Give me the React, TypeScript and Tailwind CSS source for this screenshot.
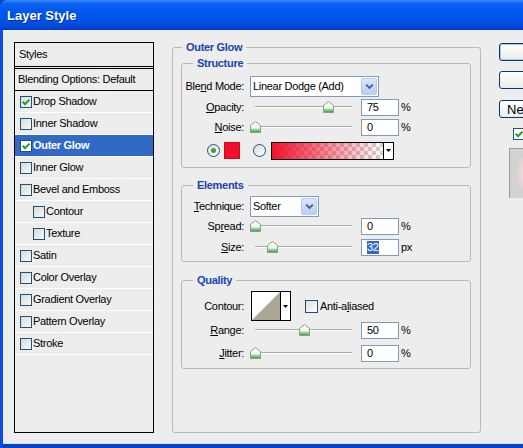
import React from "react";

function Check({ checked = false, white = false }: { checked?: boolean; white?: boolean }) {
  return (
    <span
      className={`flex h-[12px] w-[12px] shrink-0 items-center justify-center border border-[#1c5180] ${
        white ? "bg-white" : "bg-[linear-gradient(135deg,#dcdcd6,#f6f6f4)]"
      }`}
    >
      {checked && (
        <svg width="10" height="10" viewBox="0 0 10 10">
          <path d="M1.8 4.8 L4 7.2 L8.4 2.6" fill="none" stroke="#21a121" strokeWidth="2" />
        </svg>
      )}
    </span>
  );
}

function Radio({ checked = false }: { checked?: boolean }) {
  return (
    <span className="flex h-[13px] w-[13px] shrink-0 items-center justify-center rounded-full border border-[#1c5180] bg-[linear-gradient(135deg,#dcdcd6,#ffffff)]">
      {checked && <span className="h-[5px] w-[5px] rounded-full bg-[#31a631]" />}
    </span>
  );
}

function Thumb() {
  return (
    <svg width="11" height="12" viewBox="0 0 11 12">
      <defs>
        <linearGradient id="thumbFill" x1="0" y1="0" x2="0" y2="1">
          <stop offset="0" stopColor="#ffffff" />
          <stop offset="0.6" stopColor="#f1f3ef" />
          <stop offset="0.72" stopColor="#8fdc98" />
          <stop offset="1" stopColor="#2f9e45" />
        </linearGradient>
      </defs>
      <path d="M0.5 4.5 L5.5 0.5 L10.5 4.5 L10.5 11.5 L0.5 11.5 Z" fill="url(#thumbFill)" stroke="#8a9a8e" />
    </svg>
  );
}

// pos is 0..100 along the track
function Slider({ pos }: { pos: number }) {
  return (
    <div className="relative h-[17px] w-[107px]">
      <div className="absolute left-[5px] right-[5px] top-[7px] h-[2px] border-t border-b border-t-[#a8a8a8] border-b-white" />
      <div className="absolute top-[2px] flex" style={{ left: `${pos * 0.97}px` }}>
        <Thumb />
      </div>
    </div>
  );
}

function NumBox({ value, selected = false }: { value: string; selected?: boolean }) {
  return (
    <div className="flex h-[17px] w-[38px] shrink-0 items-center border border-[#7f9db9] bg-white pl-[5px]">
      {selected ? <span className="bg-[#316ac5] leading-[13px] text-white">{value}</span> : value}
    </div>
  );
}

function Combo({ text, className }: { text: string; className: string }) {
  return (
    <div className={`flex h-[21px] shrink-0 items-center border border-[#7f9db9] bg-white pl-[2px] pr-[1px] ${className}`}>
      <span className="flex-1">{text}</span>
      <span className="flex h-[17px] w-[16px] items-center justify-center rounded-[2px] border border-[#b6cbf7] bg-[linear-gradient(180deg,#dbe6fe,#b9cdfa)]">
        <svg width="9" height="7" viewBox="0 0 9 7">
          <path d="M1.2 1.6 L4.5 4.9 L7.8 1.6" fill="none" stroke="#4d6185" strokeWidth="2" />
        </svg>
      </span>
    </div>
  );
}

function SliderRow({
  label,
  pos,
  value,
  unit,
  selected = false,
  className = "",
}: {
  label: React.ReactNode;
  pos: number;
  value: string;
  unit: string;
  selected?: boolean;
  className?: string;
}) {
  return (
    <div className={`flex h-[17px] items-center ${className}`}>
      <div className="w-[63px] shrink-0 pr-[1px] text-right">{label}</div>
      <div className="ml-[5px] shrink-0">
        <Slider pos={pos} />
      </div>
      <div className="ml-[4px]">
        <NumBox value={value} selected={selected} />
      </div>
      <div className="ml-[2px]">{unit}</div>
    </div>
  );
}

function Group({ title, className, children }: { title: string; className: string; children: React.ReactNode }) {
  return (
    <fieldset className={`rounded-[3px] border border-[#b8b8b8] ${className}`}>
      <legend className="ml-[11px] px-[4px] font-bold leading-[13px] text-[#1843ad]">{title}</legend>
      {children}
    </fieldset>
  );
}

const styleRows: { name: string; checked?: boolean; active?: boolean; sub?: boolean }[] = [
  { name: "Drop Shadow", checked: true },
  { name: "Inner Shadow" },
  { name: "Outer Glow", checked: true, active: true },
  { name: "Inner Glow" },
  { name: "Bevel and Emboss" },
  { name: "Contour", sub: true },
  { name: "Texture", sub: true },
  { name: "Satin" },
  { name: "Color Overlay" },
  { name: "Gradient Overlay" },
  { name: "Pattern Overlay" },
  { name: "Stroke" },
];

const xpButton =
  "h-[18px] w-[92px] shrink-0 rounded-[3px] border border-[#003c74] bg-[linear-gradient(180deg,#ffffff,#ecebe6)]";

export default function App() {
  return (
    <div className="flex h-[448px] w-[523px] flex-col overflow-hidden bg-[#0842c6] font-['Liberation_Sans',Arial,sans-serif] text-[11px] leading-[13px] tracking-[-0.3px] text-black">
      {/* XP title bar */}
      <div className="flex h-[30px] shrink-0 items-center rounded-tl-[7px] bg-[linear-gradient(180deg,#3a8cff_0%,#0d61f2_12%,#0058ee_35%,#0053e8_70%,#0048da_90%,#0039c4_100%)] pl-[7px]">
        <span className="text-[13px] font-bold tracking-normal text-white [text-shadow:1px_1px_0_#0b2a8a]">Layer Style</span>
      </div>

      <div className="flex h-[418px] shrink-0">
        {/* left window frame */}
        <div className="w-[3px] shrink-0 bg-[#0b4fdc]" />
        <div className="flex flex-1 flex-col overflow-hidden">
          <div className="flex h-[413px] shrink-0 bg-[#ededed]">
            {/* Styles list */}
            <div className="ml-[11px] mt-[12px] h-[391px] w-[140px] shrink-0 border border-black">
              <div className="flex h-[24px] items-center border-b border-black pl-[4px]">Styles</div>
              <div className="mt-[1px] flex h-[23px] items-center border-y border-black pl-[3px]">Blending Options: Default</div>
              {styleRows.map((r) => (
                <div
                  key={r.name}
                  className={`flex h-[22px] items-center border-b border-white ${r.sub ? "pl-[18px]" : "pl-[5px]"} ${
                    r.active ? "bg-[#316ac5] font-bold text-white" : ""
                  }`}
                >
                  <Check checked={r.checked} white={r.active} />
                  <span className="ml-[1px]">{r.name}</span>
                </div>
              ))}
            </div>

            {/* Outer Glow group */}
            <fieldset className="ml-[18px] mt-[11px] h-[392px] w-[309px] shrink-0 rounded-[3px] border border-[#b8b8b8] pl-[8px] pr-[9px]">
              <legend className="ml-[1px] px-[4px] font-bold leading-[13px] text-[#1843ad]">Outer Glow</legend>

              <Group title="Structure" className="mt-[3px] pb-[8px]">
                <div className="mt-[6px] flex h-[21px] items-center">
                  <div className="w-[63px] shrink-0 pr-[1px] text-right">
                    Ble<span className="underline">n</span>d Mode:
                  </div>
                  <Combo text="Linear Dodge (Add)" className="ml-[5px] w-[129px]" />
                </div>
                <SliderRow
                  className="mt-[2px]"
                  label={
                    <>
                      <span className="underline">O</span>pacity:
                    </>
                  }
                  pos={75}
                  value="75"
                  unit="%"
                />
                <SliderRow
                  className="mt-[3px]"
                  label={
                    <>
                      <span className="underline">N</span>oise:
                    </>
                  }
                  pos={0}
                  value="0"
                  unit="%"
                />
                <div className="mt-[6px] flex h-[17px] items-center pl-[25px]">
                  <Radio checked />
                  <span className="ml-[4px] h-[17px] w-[16px] border border-[#c00a22] bg-[#f20f2d]" />
                  <span className="ml-[13px]">
                    <Radio />
                  </span>
                  <div className="ml-[5px] flex h-[18px] border border-black">
                    <div className="h-full w-[111px] bg-[repeating-conic-gradient(#cfcfcf_0_25%,#ffffff_0_50%)] bg-[length:8px_8px]">
                      <div className="h-full w-full bg-[linear-gradient(90deg,#f2122f,rgba(242,18,47,0.55)_45%,rgba(242,18,47,0))]" />
                    </div>
                    <div className="flex w-[10px] items-center justify-center border-l border-black bg-white">
                      <svg width="5" height="3" viewBox="0 0 5 3">
                        <path d="M0 0 H5 L2.5 3 Z" fill="#000" />
                      </svg>
                    </div>
                  </div>
                </div>
              </Group>

              <Group title="Elements" className="mt-[11px] pb-[5px]">
                <div className="mt-[4px] flex h-[21px] items-center">
                  <div className="w-[63px] shrink-0 pr-[1px] text-right">
                    <span className="underline">T</span>echnique:
                  </div>
                  <Combo text="Softer" className="ml-[5px] w-[69px]" />
                </div>
                <SliderRow
                  className="mt-[1px]"
                  label={
                    <>
                      Sp<span className="underline">r</span>ead:
                    </>
                  }
                  pos={0}
                  value="0"
                  unit="%"
                />
                <SliderRow
                  className="mt-[4px]"
                  label={
                    <>
                      <span className="underline">S</span>ize:
                    </>
                  }
                  pos={18}
                  value="32"
                  unit="px"
                  selected
                />
              </Group>

              <Group title="Quality" className="mt-[12px] pb-[6px]">
                <div className="mt-[4px] flex h-[30px] items-center">
                  <div className="w-[63px] shrink-0 pr-[1px] text-right">Contour:</div>
                  <div className="ml-[6px] flex h-[30px] border border-black">
                    <svg width="28" height="28" viewBox="0 0 28 28" className="bg-white">
                      <path d="M0 28 L28 0 L28 28 Z" fill="#aca899" />
                    </svg>
                    <div className="flex w-[10px] items-center justify-center border-l border-black bg-white">
                      <svg width="5" height="3" viewBox="0 0 5 3">
                        <path d="M0 0 H5 L2.5 3 Z" fill="#000" />
                      </svg>
                    </div>
                  </div>
                  <div className="ml-[14px] flex items-center">
                    <span className="flex h-[13px] w-[13px] border border-[#1c5180] bg-[linear-gradient(135deg,#dcdcd6,#ffffff)]" />
                    <span className="ml-[2px]">
                      Anti-a<span className="underline">l</span>iased
                    </span>
                  </div>
                </div>
                <SliderRow
                  className="mt-[1px]"
                  label={
                    <>
                      <span className="underline">R</span>ange:
                    </>
                  }
                  pos={50}
                  value="50"
                  unit="%"
                />
                <SliderRow
                  className="mt-[6px]"
                  label={
                    <>
                      <span className="underline">J</span>itter:
                    </>
                  }
                  pos={0}
                  value="0"
                  unit="%"
                />
              </Group>
            </fieldset>

            {/* Buttons and preview */}
            <div className="ml-[18px] mt-[13px] flex shrink-0 flex-col">
              <button className={`${xpButton} shadow-[inset_0_0_0_1px_#a7c4f4]`}>OK</button>
              <button className={`${xpButton} mt-[10px]`}>Cancel</button>
              <button className={`${xpButton} mt-[11px] pl-[7px] text-left text-[13px] tracking-normal`}>New Style...</button>
              <div className="ml-[14px] mt-[9px] flex items-center">
                <Check checked white />
                <span className="ml-[3px]">Preview</span>
              </div>
              <div className="ml-[10px] mt-[8px] h-[50px] w-[60px] border-l border-t border-[#9c9c9c] bg-[radial-gradient(circle_at_32px_24px,#ffd6da_0,#ffdadd_17px,#d2d2d2_27px)]" />
            </div>
          </div>
          {/* bottom window frame */}
          <div className="h-[1px] shrink-0 bg-[#d6e2f7]" />
          <div className="h-[4px] shrink-0 bg-[#0842c6]" />
        </div>
      </div>
    </div>
  );
}
